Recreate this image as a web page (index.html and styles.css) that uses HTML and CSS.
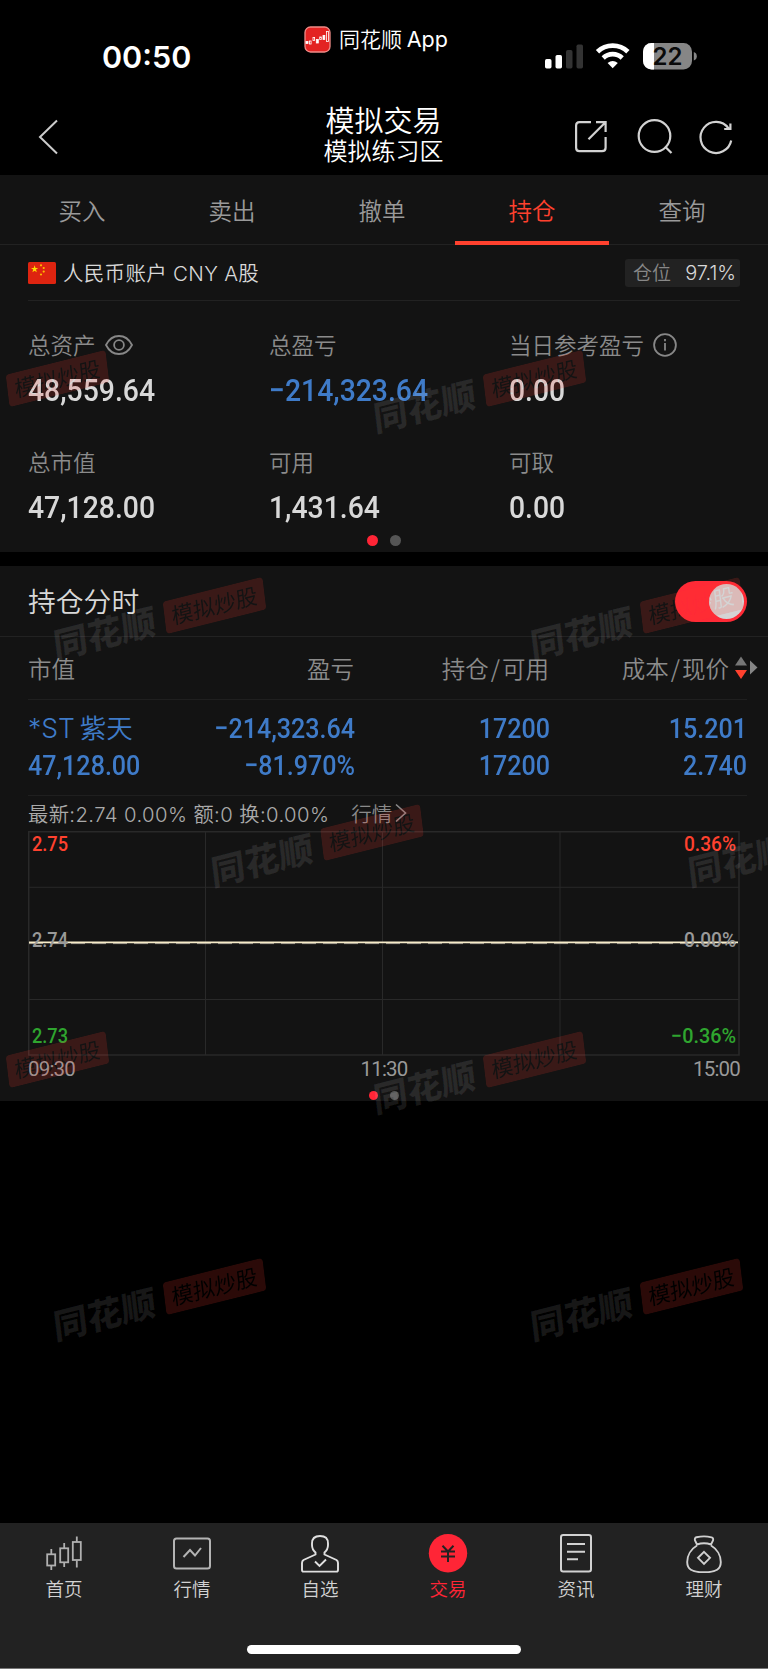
FILE: index.html
```html
<!DOCTYPE html>
<html lang="zh-CN">
<head>
  <meta charset="UTF-8">
  <meta name="viewport" content="width=device-width, initial-scale=1.0">
  <title>模拟交易</title>
  <link rel="stylesheet" href="styles.css">
</head>
<body>

<header class="header">
  <div class="status">
    <div class="time">00:50</div>
    <div class="app">
      <svg width="27" height="27" viewBox="0 0 27 27">
        <rect x="1" y="1" width="25" height="25" rx="5.5" fill="#e32322" stroke="#f08c88" stroke-width="1.3"/>
        <g fill="#fff" stroke="#fff" stroke-width=".8">
          <rect x="2" y="15.5" width="2" height="2"/>
          <rect x="5.5" y="15" width="1.6" height="3" fill="none"/>
          <rect x="9" y="11.5" width="1.6" height="3" fill="none"/>
          <rect x="12.3" y="13.5" width="2" height="3.5"/>
          <rect x="15.7" y="11" width="1.6" height="2.5" fill="none"/>
          <rect x="19" y="9.5" width="1.8" height="4"/>
          <rect x="22.5" y="5.5" width="2" height="10" fill="none"/>
        </g>
      </svg>
      <span class="app-name">同花顺 <i>App</i></span>
    </div>
    <div class="signals">
      <svg width="154" height="30" viewBox="0 0 154 30">
        <rect x="1" y="17" width="6.5" height="9.5" rx="1.7" fill="#fff"/>
        <rect x="11.5" y="13" width="6.5" height="13.5" rx="1.7" fill="#fff"/>
        <rect x="22" y="8" width="6.5" height="18.5" rx="1.7" fill="#333"/>
        <rect x="32.5" y="2.5" width="6.5" height="24" rx="1.7" fill="#333"/>
        <path d="M53.5 9.8A22 22 0 0 1 83.9 9.8" fill="none" stroke="#fff" stroke-width="4.8"/>
        <path d="M59.2 16A13.6 13.6 0 0 1 78.2 16" fill="none" stroke="#fff" stroke-width="4.6"/>
        <path d="M68.7 26.3L63.6 21.1Q68.7 17 73.8 21.1Z" fill="#fff"/>
        <clipPath id="bat"><rect x="99" y="1" width="49" height="26.5" rx="8.5"/></clipPath>
        <g clip-path="url(#bat)">
          <rect x="99" y="1" width="49" height="27" fill="#868686"/>
          <rect x="99" y="1" width="11" height="27" fill="#fff"/>
        </g>
        <path d="M149.8 10Q152.8 11 152.8 14.2T149.8 18.5Z" fill="#868686"/>
        <text x="123.5" y="22.5" class="battery-text">22</text>
      </svg>
    </div>
  </div>
  <div class="nav">
    <svg width="20" height="36" viewBox="0 0 20 36"><path d="M19 1.5L2 18L19 34.5" fill="none" stroke="#ccc" stroke-width="2"/></svg>
    <div class="nav-title">
      <div class="title">模拟交易</div>
      <div class="subtitle">模拟练习区</div>
    </div>
    <svg width="160" height="38" viewBox="0 0 160 38" fill="none" stroke="#d2d2d2" stroke-width="2.2">
      <path d="M17 4.1H5.5Q2.1 4.1 2.1 7.5V29.8Q2.1 33.2 5.5 33.2H28Q31.6 33.2 31.6 29.8V19"/>
      <path d="M22 4.1H31.6V14M31 4.7L14.5 21.3"/>
      <circle cx="80.5" cy="18" r="15.8"/>
      <path d="M91 28.5L97.5 35"/>
      <path d="M157.2 22.5A15.5 15.5 0 1 1 154.5 10.3M150.2 11H156.4V5.5"/>
    </svg>
  </div>
</header>

<main class="main">
  <nav class="tabs">
    <a>买入</a>
    <a>卖出</a>
    <a>撤单</a>
    <a class="active">持仓</a>
    <a>查询</a>
  </nav>

  <section class="account">
    <div class="account-head">
      <svg width="28" height="22" viewBox="0 0 28 22">
        <rect width="28" height="22" rx="1.5" fill="#de2410"/>
        <path d="M6.6 3.2L7.5 5.9H10.2L8 7.6L8.8 10.3L6.6 8.7L4.4 10.3L5.2 7.6L3 5.9H5.7Z" fill="#fd0"/>
        <g fill="#fb0"><circle cx="13" cy="3.3" r="1.1"/><circle cx="15.7" cy="6" r="1.1"/><circle cx="15.7" cy="9.6" r="1.1"/><circle cx="13" cy="12.5" r="1.1"/></g>
      </svg>
      <span class="account-name">人民币账户 CNY A股</span>
      <span class="ratio">仓位 <b>97.1%</b></span>
    </div>
    <div class="stats">
      <div class="stat">
        <div class="label"><span>总资产</span>
          <svg width="28" height="20" viewBox="0 0 28 20" fill="none" stroke="#878787" stroke-width="1.8"><path d="M1 10C7-2 21-2 27 10C21 22 7 22 1 10Z"/><circle cx="14" cy="10" r="4.9"/></svg>
        </div>
        <div class="value">48,559.64</div>
      </div>
      <div class="stat">
        <div class="label"><span>总盈亏</span></div>
        <div class="value blue">−214,323.64</div>
      </div>
      <div class="stat">
        <div class="label"><span>当日参考盈亏</span>
          <svg width="24" height="24" viewBox="0 0 24 24" fill="none" stroke="#878787" stroke-width="1.8"><circle cx="12" cy="12" r="10.9"/><path d="M12 10V17.5M12 6V8.2"/></svg>
        </div>
        <div class="value">0.00</div>
      </div>
      <div class="stat">
        <div class="label"><span>总市值</span></div>
        <div class="value">47,128.00</div>
      </div>
      <div class="stat">
        <div class="label"><span>可用</span></div>
        <div class="value">1,431.64</div>
      </div>
      <div class="stat">
        <div class="label"><span>可取</span></div>
        <div class="value">0.00</div>
      </div>
    </div>
    <div class="dots"><i class="on"></i><i></i></div>
  </section>

  <section class="holdings">
    <div class="holdings-head">
      <h2>持仓分时</h2>
      <div class="toggle"></div>
    </div>
    <div class="row table-head">
      <span>市值</span>
      <span>盈亏</span>
      <span>持仓<em>/</em>可用</span>
      <span>成本<em>/</em>现价</span>
      <svg width="24" height="24" viewBox="0 0 24 24"><path d="M0 9.5L6 .5L12 9.5Z" fill="#767676"/><path d="M0 14L6 23L12 14Z" fill="#ff412e"/><path d="M15 4.5L22.5 11.5L15 18.5Z" fill="#868686"/></svg>
    </div>
    <div class="stock">
      <div class="row">
        <span class="stock-name">*ST<em>紫天</em></span>
        <span class="num">−214,323.64</span>
        <span class="num">17200</span>
        <span class="num">15.201</span>
      </div>
      <div class="row">
        <span class="num">47,128.00</span>
        <span class="num">−81.970%</span>
        <span class="num">17200</span>
        <span class="num">2.740</span>
      </div>
    </div>
    <div class="quote">
      <span class="quote-text">最新:2.74 0.00% 额:0 换:0.00%</span>
      <span class="more">行情</span>
      <svg width="12" height="20" viewBox="0 0 12 20"><path d="M1 1.5L10.5 10L1 18.5" fill="none" stroke="#8a8a8a" stroke-width="1.6"/></svg>
    </div>
    <svg class="chart" width="712" height="225" viewBox="0 0 712 225">
      <g stroke="#292929" fill="none">
        <path d="M0 56.3H711M0 168.5H711M177.5 0V224M354.5 0V224M532 0V224"/>
        <path d="M.7 224V.8H711V224Z" stroke-width="1.6"/>
      </g>
      <path d="M1 112.6H710" stroke="#9a978c" stroke-dasharray="14 7"/>
      <path d="M1 111.4H710" stroke="#f7ecc9" stroke-width="1.8"/>
      <text x="4" y="20" class="up" textLength="36" lengthAdjust="spacingAndGlyphs">2.75</text>
      <text x="4" y="116" class="flat" textLength="36" lengthAdjust="spacingAndGlyphs">2.74</text>
      <text x="4" y="212" class="down" textLength="36" lengthAdjust="spacingAndGlyphs">2.73</text>
      <text x="656" y="20" class="up" textLength="52" lengthAdjust="spacingAndGlyphs">0.36%</text>
      <text x="656" y="116" class="flat" textLength="52" lengthAdjust="spacingAndGlyphs">0.00%</text>
      <text x="643" y="212" class="down" textLength="65" lengthAdjust="spacingAndGlyphs">−0.36%</text>
    </svg>
    <div class="times"><span>09:30</span><span>11:30</span><span>15:00</span></div>
    <div class="dots small"><i class="on"></i><i></i></div>
  </section>

  <svg class="watermark" width="768" height="1348" viewBox="0 175 768 1348">
    <defs>
      <mask id="cut" maskUnits="userSpaceOnUse" x="-60" y="-30" width="120" height="60">
        <rect x="-51.5" y="-16.5" width="103" height="33" rx="4" fill="#fff"/>
        <text x="-44" y="8.5" class="wm-tag">模拟炒股</text>
      </mask>
      <g id="mark" transform="matrix(.97 -.242 .12 .99 0 0)">
        <text x="-166" y="13.5" class="wm-name">同花顺</text>
        <rect x="-51.5" y="-16.5" width="103" height="33" fill="#ff3b30" fill-opacity=".17" mask="url(#cut)"/>
      </g>
    </defs>
    <use href="#mark" x="57.5" y="378.5"/>
    <use href="#mark" x="534.5" y="378.5"/>
    <use href="#mark" x="214.5" y="605.5"/>
    <use href="#mark" x="691.5" y="605.5"/>
    <use href="#mark" x="372" y="832.5"/>
    <use href="#mark" x="849" y="832.5"/>
    <use href="#mark" x="57.5" y="1059.5"/>
    <use href="#mark" x="534.5" y="1059.5"/>
    <use href="#mark" x="214.5" y="1286.5"/>
    <use href="#mark" x="691.5" y="1286.5"/>
  </svg>
</main>

<footer class="tabbar">
  <div class="items">
    <a>
      <svg width="40" height="40" viewBox="0 0 40 40" fill="none" stroke="#b0b0b0" stroke-width="1.8"><rect x="3.2" y="21.3" width="8" height="11.2"/><path d="M7.3 16V21M7.3 33V37"/><rect x="16.2" y="15.3" width="8" height="14"/><path d="M20.2 10V15M20.2 30V34"/><rect x="28.8" y="9" width="8" height="18"/><path d="M32.8 3.5V9M32.8 27.5V34.5"/></svg>
      首页
    </a>
    <a>
      <svg width="40" height="40" viewBox="0 0 40 40" fill="none" stroke="#b4b4b4" stroke-width="2"><rect x="2" y="5.5" width="36" height="30" rx="2.5"/><path d="M11.5 24L18 17L23 22.5L29 15"/></svg>
      行情
    </a>
    <a>
      <svg width="40" height="40" viewBox="0 0 40 40" fill="none" stroke="#e0e0e0" stroke-width="1.9"><path d="M15.5 19.5V21.5L3.5 27Q2 28 2 30V37Q2 38.6 3.6 38.6H36.4Q38 38.6 38 37V30Q38 28 36.5 27L24.5 21.5V19.5Q28 16.5 28 12V10.5Q28 3 20 3T12 10.5V12Q12 16.5 15.5 19.5Z"/><path d="M15 28.5L19.5 33L26 26.5"/></svg>
      自选
    </a>
    <a class="active">
      <svg width="40" height="40" viewBox="0 0 40 40"><circle cx="20" cy="20.2" r="19.2" fill="#ff2536"/><path d="M14.5 12.8L20 18.5L25.5 12.8M20 18V29M13 18.5H27M13 23.5H27" fill="none" stroke="#222" stroke-width="2"/></svg>
      交易
    </a>
    <a>
      <svg width="40" height="40" viewBox="0 0 40 40" fill="none" stroke="#d2d2d2" stroke-width="2"><rect x="5" y="2" width="30" height="36.5" rx="2.2"/><path d="M11 11H29M11 18.7H29M11 26.3H22"/></svg>
      资讯
    </a>
    <a>
      <svg width="40" height="40" viewBox="0 0 40 40" fill="none" stroke="#d0d0d0" stroke-width="1.9"><path d="M13 11.5L11 7.5Q10.3 4.8 12.5 4.3Q20 2.5 27.5 4.3Q29.7 4.8 29 7.5L27 11.5Q20 9 13 11.5Z"/><path d="M13 12.5C7 16 3.2 22.5 3.2 29C3.2 36 7.5 39.3 20 39.3S36.8 36 36.8 29C36.8 22.5 33 16 27 12.5"/><path d="M20 18.8L26 24.8L20 30.8L14 24.8Z"/></svg>
      理财
    </a>
  </div>
  <div class="home"></div>
</footer>

</body>
</html>
```

FILE: styles.css
```css
* {
  box-sizing: border-box;
}

body {
  margin: 0;
  width: 768px;
  height: 1669px;
  display: flex;
  flex-direction: column;
  overflow: hidden;
  background-color: #000;
  color: #d8d8d8;
  font-family: "Noto Sans CJK SC", sans-serif;
  font-weight: 350;
}

svg {
  display: block;
  flex: none;
}

i, em {
  font-style: normal;
}

/* status bar and title */
.header {
  height: 175px;
  color: #fff;
}

.status {
  height: 90px;
  display: grid;
  grid-template-columns: 304px 1fr 224px;
}

.time {
  padding: 36px 0 0 102px;
  font: 600 30.5px/42px Inter, sans-serif;
}

.app {
  display: flex;
  padding-top: 26px;
}

.app-name {
  margin: -2px 0 0 8px;
  font-size: 21px;
  line-height: 28px;
  white-space: nowrap;
}

.app-name i {
  font-family: Inter, sans-serif;
  font-size: 21.5px;
  font-weight: 400;
}

.signals {
  padding-top: 42px;
}

.battery-text {
  font: 600 24px Inter, sans-serif;
  text-anchor: middle;
  fill: #0a0a0a;
}

.nav {
  height: 85px;
  display: grid;
  grid-template-columns: 20px 1fr 160px;
  align-items: center;
  padding: 8px 34px 0 38px;
}

.nav-title {
  padding-left: 135px;
  margin-top: -5px;
  text-align: center;
}

.title {
  font-size: 29px;
  line-height: 32px;
}

.subtitle {
  font-size: 24px;
  line-height: 30px;
}

/* tabs */
.main {
  position: relative;
  height: 1348px;
}

.tabs {
  height: 70px;
  display: flex;
  padding: 0 11px 0 7px;
  background-color: #131313;
  border-bottom: 1px solid #222;
}

.tabs a {
  flex: 1;
  position: relative;
  text-align: center;
  font-size: 23.5px;
  line-height: 70px;
  color: #9a9a9a;
}

.tabs .active {
  color: #ff412e;
}

.tabs .active::after {
  content: "";
  position: absolute;
  left: -2px;
  right: -2px;
  bottom: -1px;
  height: 4px;
  background-color: #ff412e;
}

/* account summary */
.account {
  height: 307px;
  padding: 0 28px;
  background-color: #131313;
}

.account-head {
  height: 56px;
  display: flex;
  align-items: center;
  border-bottom: 1px solid #222;
}

.account-name {
  margin: -2px 0 0 7px;
  font-family: Inter, "Noto Sans CJK SC", sans-serif;
  font-size: 20.5px;
  letter-spacing: 0.3px;
}

.ratio {
  display: flex;
  align-items: center;
  justify-content: space-between;
  width: 115px;
  height: 28px;
  margin-left: auto;
  padding: 0 4px 2px 8px;
  border-radius: 3px;
  background-color: #222;
  color: #888;
  font-size: 19px;
}

.ratio b {
  margin-top: 2px;
  font: 350 20px Inter, sans-serif;
  color: #d8d8d8;
}

.stats {
  display: grid;
  grid-template-columns: 241px 240px 1fr;
  grid-auto-rows: 117px;
  padding-top: 26px;
}

.label {
  height: 36px;
  display: flex;
  align-items: center;
  gap: 9px;
  font-size: 22.5px;
  color: #8b8b8b;
}

.label span {
  padding-bottom: 2px;
}

.value {
  height: 54px;
  line-height: 55px;
  width: max-content;
  font-family: Roboto, sans-serif;
  font-size: 31.5px;
  font-weight: 500;
  transform: scaleX(0.9);
  transform-origin: left;
}

.blue {
  color: #3f7bc8;
}

.dots {
  display: flex;
  justify-content: center;
  gap: 12px;
  margin-top: -26px;
}

.dots i {
  width: 11px;
  height: 11px;
  border-radius: 50%;
  background-color: #555;
}

.dots .on {
  background-color: #ff2536;
}

/* holdings */
.holdings {
  height: 535px;
  margin-top: 14px;
  background-color: #131313;
}

.holdings-head {
  height: 71px;
  display: flex;
  align-items: center;
  justify-content: space-between;
  padding: 0 21px 0 28px;
  border-bottom: 1px solid #222;
}

h2 {
  margin: -3px 0 0;
  font-size: 27.8px;
  font-weight: 350;
}

.toggle {
  width: 72px;
  height: 41px;
  padding: 3px;
  border-radius: 21px;
  background-color: #ff2a36;
}

.toggle::after {
  content: "";
  display: block;
  width: 35px;
  height: 35px;
  margin-left: auto;
  border-radius: 50%;
  background-color: #d4d4d4;
}

.row {
  display: grid;
  grid-template-columns: 145px 182px 195px 197px;
  align-items: center;
  text-align: right;
}

.row span:first-child {
  text-align: left;
}

.table-head {
  height: 62px;
  margin: 0 9px 0 28px;
  padding-bottom: 1px;
  grid-template-columns: 145px 181px 195px 180px 24px;
  font-size: 23.5px;
  color: #8b8b8b;
}

.table-head svg {
  margin-left: 6px;
}

.table-head em {
  margin: 0 2px;
}

.stock {
  height: 97px;
  margin: 0 21px 0 28px;
  padding-top: 10px;
  border: 1px solid #1f1f1f;
  border-width: 1px 0;
  color: #3f7bc8;
}

.stock .row {
  height: 37px;
}

.stock-name {
  margin-top: -4px;
  font-family: Inter, "Noto Sans CJK SC", sans-serif;
  font-size: 26.5px;
  white-space: nowrap;
}

.stock-name em {
  margin-left: 5px;
}

.num {
  font-family: Roboto, sans-serif;
  font-size: 28.5px;
  font-weight: 500;
  white-space: nowrap;
  transform: scaleX(0.88);
  transform-origin: right;
}

.num:first-child {
  transform-origin: left;
}

.quote {
  height: 35px;
  display: flex;
  align-items: center;
  padding: 0 0 2px 28px;
  font-size: 20.5px;
  color: #aaa;
}

.quote-text {
  font-family: Inter, "Noto Sans CJK SC", sans-serif;
  font-size: 20.3px;
  letter-spacing: 0.4px;
}

.more {
  margin: 0 3px 0 22px;
  color: #8a8a8a;
}

.chart {
  margin-left: 28px;
}

.chart text {
  font-family: Roboto, sans-serif;
  font-size: 21px;
  font-weight: 500;
}

.up {
  fill: #ff412e;
}

.flat {
  fill: #999;
}

.down {
  fill: #2fa52f;
}

.times {
  display: flex;
  justify-content: space-between;
  padding: 0 28px;
  font: 450 20.5px/27px Roboto, sans-serif;
  letter-spacing: -0.8px;
  color: #999;
}

.small {
  gap: 12px;
  margin-top: 8px;
}

.small i {
  width: 9px;
  height: 9px;
}

/* tiled watermark over the page */
.watermark {
  position: absolute;
  left: 0;
  top: 0;
  pointer-events: none;
}

.wm-name {
  font-size: 35px;
  font-weight: 900;
  fill: #fff;
  fill-opacity: 0.09;
}

.wm-tag {
  font-size: 22px;
  font-weight: 400;
  fill: #000;
}

/* bottom bar */
.tabbar {
  height: 146px;
  background-color: #222;
  border-bottom: 1px solid #777;
}

.items {
  display: flex;
}

.items a {
  flex: 1;
  display: flex;
  flex-direction: column;
  align-items: center;
  padding-top: 10px;
  font-size: 18.5px;
  line-height: 31px;
  color: #d2d2d2;
}

.items .active {
  color: #ff2536;
}

.home {
  width: 274px;
  height: 9px;
  margin: 41px auto 0;
  border-radius: 5px;
  background-color: #fff;
}
```
